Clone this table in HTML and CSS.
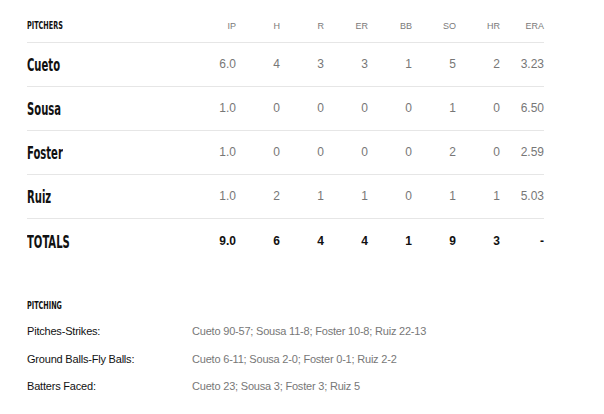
FILE: index.html
```html
<!DOCTYPE html>
<html>
<head>
<meta charset="utf-8">
<link rel="stylesheet" href="styles.css">
</head>
<body>
<div class="page">
  <table class="box">
    <thead>
      <tr>
        <th class="name-h"><span class="cond">PITCHERS</span></th>
        <th>IP</th><th>H</th><th>R</th><th>ER</th><th>BB</th><th>SO</th><th>HR</th><th>ERA</th>
      </tr>
    </thead>
    <tbody>
      <tr><td class="name"><span class="cond">Cueto</span></td><td>6.0</td><td>4</td><td>3</td><td>3</td><td>1</td><td>5</td><td>2</td><td>3.23</td></tr>
      <tr><td class="name"><span class="cond">Sousa</span></td><td>1.0</td><td>0</td><td>0</td><td>0</td><td>0</td><td>1</td><td>0</td><td>6.50</td></tr>
      <tr><td class="name"><span class="cond">Foster</span></td><td>1.0</td><td>0</td><td>0</td><td>0</td><td>0</td><td>2</td><td>0</td><td>2.59</td></tr>
      <tr><td class="name"><span class="cond">Ruiz</span></td><td>1.0</td><td>2</td><td>1</td><td>1</td><td>0</td><td>1</td><td>1</td><td>5.03</td></tr>
      <tr class="totals"><td class="name"><span class="cond">TOTALS</span></td><td>9.0</td><td>6</td><td>4</td><td>4</td><td>1</td><td>9</td><td>3</td><td>-</td></tr>
    </tbody>
  </table>

  <div class="notes">
    <div class="notes-title"><span class="cond">PITCHING</span></div>
    <div class="note"><span class="label">Pitches-Strikes:</span><span class="value">Cueto 90-57; Sousa 11-8; Foster 10-8; Ruiz 22-13</span></div>
    <div class="note"><span class="label">Ground Balls-Fly Balls:</span><span class="value">Cueto 6-11; Sousa 2-0; Foster 0-1; Ruiz 2-2</span></div>
    <div class="note"><span class="label">Batters Faced:</span><span class="value">Cueto 23; Sousa 3; Foster 3; Ruiz 5</span></div>
  </div>
</div>
</body>
</html>
```

FILE: styles.css
```css
html, body {
  margin: 0;
  padding: 0;
  background: #fff;
}
body {
  font-family: "Liberation Sans", Arial, sans-serif;
  color: #111;
}
.page {
  padding: 0 60px 0 27px;
}
.cond {
  display: inline-block;
  font-family: "DejaVu Sans Condensed", "DejaVu Sans", sans-serif;
  font-stretch: condensed;
  font-weight: bold;
  color: #111;
  transform: scaleX(0.62);
  transform-origin: left center;
  white-space: nowrap;
}
.box {
  width: 517px;
  border-collapse: collapse;
  table-layout: fixed;
}
.box th, .box td {
  width: 44px;
  padding: 0;
  text-align: right;
}
.box th.name-h, .box td.name {
  width: 165px;
  text-align: left;
}
.box thead th {
  height: 42px;
  padding-top: 10px;
  box-sizing: border-box;
  font-size: 9px;
  font-weight: normal;
  color: #7a7a7a;
  border-bottom: 1px solid #e6e6e6;
  vertical-align: middle;
}
.box thead th.name-h .cond {
  font-size: 10px;
  transform: scaleX(0.72);
}
.box tbody td {
  height: 43px;
  font-size: 12px;
  color: #777;
  border-bottom: 1px solid #e6e6e6;
  vertical-align: middle;
}
.box tbody td.name .cond {
  font-size: 18px;
}
.box tbody tr.totals td {
  height: 45px;
  border-bottom: none;
  color: #111;
  font-weight: bold;
}
.notes {
  padding-top: 31px;
}
.notes-title {
  height: 23px;
}
.notes-title .cond {
  font-size: 10px;
  transform: scaleX(0.72);
}
.note {
  display: flex;
  height: 27.5px;
  align-items: center;
  font-size: 11px;
  letter-spacing: -0.2px;
}
.label {
  width: 165px;
  color: #111;
}
.value {
  color: #777;
}
```
